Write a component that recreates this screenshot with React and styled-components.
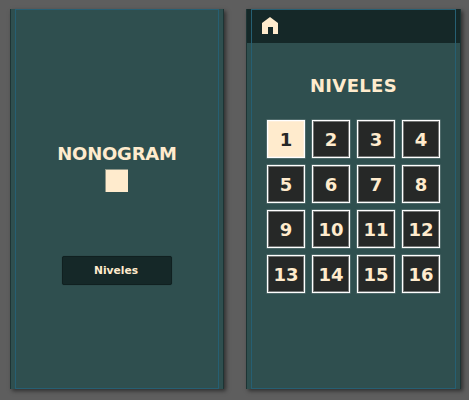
import React from "react";
import styled, { createGlobalStyle } from "styled-components";

const GlobalStyle = createGlobalStyle`
  * { box-sizing: border-box; }
  body { margin: 0; background: #5e5e5e; overflow: hidden; }
`;

const Board = styled.main`
  display: flex;
  gap: 22px;
  width: 469px;
  height: 400px;
  padding: 9px 0 0 10px;
  background: #5e5e5e;
  font-family: "DejaVu Sans", Verdana, sans-serif;
  font-weight: 700;
  color: #ffebcd;
`;

const Phone = styled.section`
  position: relative;
  display: flex;
  flex-direction: column;
  align-items: center;
  flex: none;
  width: ${(p) => p.$width}px;
  height: 380px;
  background: #2f4f4f;
  border: solid #1d3434;
  border-width: 0 1px 0 1px;
  box-shadow: 2px 2px 4px rgba(0, 0, 0, 0.5);
`;

const Guides = styled.div`
  position: absolute;
  inset: 0 4px 0 4px;
  border: 1px solid #265f73;
  pointer-events: none;
`;

const Title = styled.h1`
  margin: ${(p) => p.$top}px 0 0;
  font-size: 18px;
  line-height: 22px;
  letter-spacing: ${(p) => p.$tracking || 0}px;
`;

const Cell = styled.div`
  width: 23px;
  height: 23px;
  margin: 4px 2px 0 0;
  background: #ffebcd;
  border: solid #8f9688;
  border-width: 1px 0 0 1px;
`;

const MenuButton = styled.button`
  width: 110px;
  height: 29px;
  margin: 64px 0 0;
  padding: 0 2px 0 0;
  border: 1px solid #102020;
  border-radius: 2px;
  background: #152828;
  color: inherit;
  font: 700 10.67px/27px "DejaVu Sans", Verdana, sans-serif;
  box-shadow: 0 0 1px rgba(0, 0, 0, 0.4);
`;

const TopBar = styled.header`
  width: 100%;
  height: 34px;
  padding: 8px 0 0 14px;
  background: #152828;
`;

const HomeIcon = styled.svg`
  display: block;
  width: 18px;
  height: 18px;
  fill: #ffebcd;
`;

const LevelGrid = styled.div`
  display: grid;
  grid-template-columns: repeat(4, 38px);
  grid-auto-rows: 38px;
  gap: 7px;
  margin: 23px 0 0 0;
`;

const Level = styled.button`
  padding: 1px 0 0;
  border: 1px solid #fff;
  background: ${(p) => (p.$active ? "#ffebcd" : "#262827")};
  color: ${(p) => (p.$active ? "#262827" : "#ffebcd")};
  font: 700 18px/35px "DejaVu Sans", Verdana, sans-serif;
  box-shadow: inset 0 0 0 1px ${(p) => (p.$active ? "#ffefda" : "#737574")},
    0 0 0 0.5px #708585;
`;

const levels = Array.from({ length: 16 }, (_, i) => i + 1);

export default function App() {
  return (
    <>
      <GlobalStyle />
      <Board>
        <Phone $width={214}>
          <Guides />
          <Title $top={134} $tracking={-0.2}>NONOGRAM</Title>
          <Cell />
          <MenuButton>Niveles</MenuButton>
        </Phone>
        <Phone $width={215}>
          <TopBar>
            <HomeIcon viewBox="0 0 18 18">
              <path d="M9 0 17 6V17H12V10H7V17H1V6Z" />
            </HomeIcon>
          </TopBar>
          <Guides />
          <Title $top={32} $tracking={0.35}>NIVELES</Title>
          <LevelGrid>
            {levels.map((n) => (
              <Level key={n} $active={n === 1}>{n}</Level>
            ))}
          </LevelGrid>
        </Phone>
      </Board>
    </>
  );
}
